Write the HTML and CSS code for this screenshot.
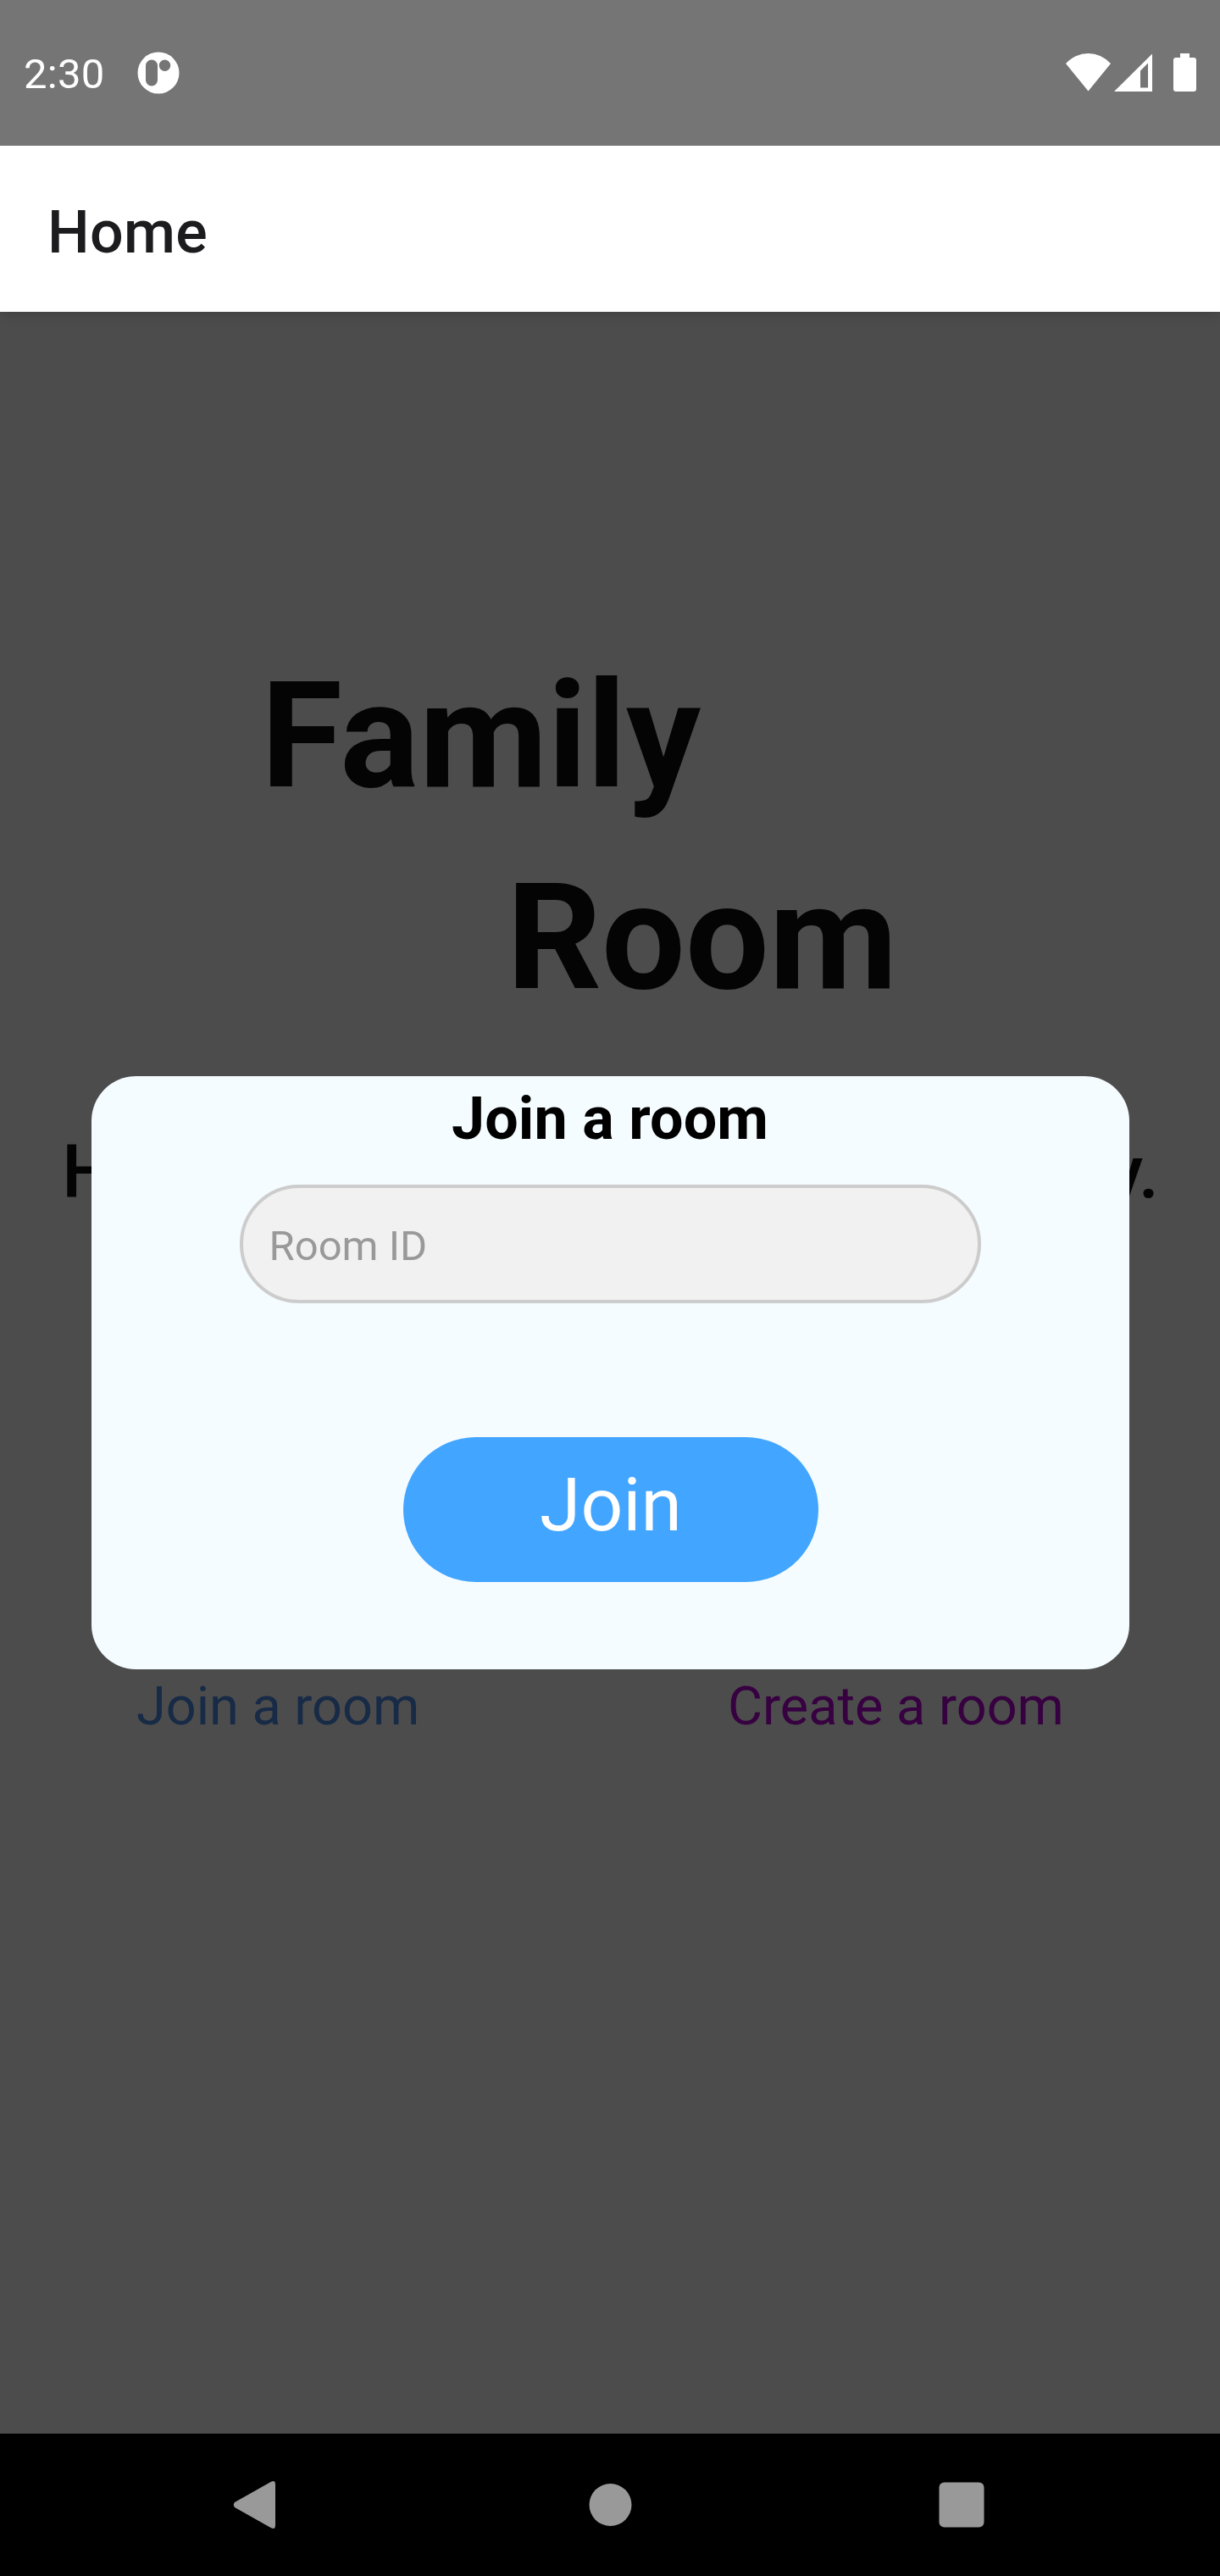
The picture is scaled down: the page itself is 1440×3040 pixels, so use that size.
FILE: index.html
```html
<!DOCTYPE html>
<html lang="en">
<head>
<meta charset="utf-8">
<title>Family Room</title>
<link rel="stylesheet" href="styles.css">
</head>
<body>
<div class="screen">
  <div class="status">
    <span class="clock">2:30</span>
    <svg class="app-icon" width="50" height="50" viewBox="0 0 50 50"><path fill="#fff" fill-rule="evenodd" d="M25 .5a24.5 24.5 0 1 1 0 49a24.5 24.5 0 1 1 0-49zM17 9.5a7 7 0 0 0-7 7v17a7 7 0 0 0 14 0v-17a7 7 0 0 0-7-7zM32.500 9.500a6.700 6.700 0 1 0 0 13.400a6.700 6.700 0 1 0 0-13.400z"/></svg>
    <svg class="system-icons" width="156" height="48" viewBox="0 0 156 48" fill="#fff">
      <path d="M0 14Q11.500 2 26.500 2T53 14L26.500 46.500z"/>
      <path fill-rule="evenodd" d="M57 47L102 2.500V47zM88 22.500V42.500H97V13.500z"/>
      <path d="M135 2h11v5h5q3 0 3 3v34q0 3-3 3h-21q-3 0-3-3V10q0-3 3-3h5z"/>
    </svg>
  </div>
  <header class="header"><span>Home</span></header>
  <main class="home">
    <h1 class="brand"><span class="brand-top">Family</span><span class="brand-bottom">Room</span></h1>
    <div class="tagline"><span>H</span><span>y.</span></div>
    <div class="links"><span class="join-link">Join a room</span><span class="create-link">Create a room</span></div>
    <section class="modal">
      <h2 class="modal-title">Join a room</h2>
      <input class="room-input" type="text" placeholder="Room ID">
      <button class="join-button">Join</button>
    </section>
  </main>
  <nav class="navbar">
    <svg width="60" height="60" viewBox="0 0 60 60" fill="#999"><path d="M7 27L50 2.800Q55 .5 55 6V54Q55 59.500 50 57.200L7 33Q4.500 30 7 27z"/></svg>
    <svg width="60" height="60" viewBox="0 0 60 60" fill="#999"><circle cx="32.500" cy="30" r="25"/></svg>
    <svg width="60" height="60" viewBox="0 0 60 60" fill="#999"><rect x="3.500" y="3.500" width="53" height="53" rx="6"/></svg>
  </nav>
</div>
</body>
</html>
```
FILE: styles.css
```css
* { box-sizing: border-box; }
body { margin: 0; font-family: Roboto, sans-serif; }
.screen { width: 1440px; height: 3040px; display: flex; flex-direction: column; background: #4c4c4c; overflow: hidden; }
.status { position: relative; z-index: 2; height: 172px; background: #757575; color: #fff; display: flex; align-items: flex-start; padding: 61px 26px 0 28px; }
.clock { font-size: 49px; line-height: 54px; width: 134px; letter-spacing: .3px; }
.system-icons { margin-left: auto; }
.header { height: 196px; background: #fff; display: flex; align-items: center; padding: 8px 56px 0; font-size: 70px; font-weight: 500; letter-spacing: .3px; color: #1c1c1e; box-shadow: 0 2px 14px rgba(0, 0, 0, .18); z-index: 1; }
.home { position: relative; flex: 1; padding-top: 382px; color: #040404; }
.brand { margin: 0; font-size: 175px; line-height: 238px; font-weight: 700; display: flex; flex-direction: column; }
.brand-top { padding-left: 308px; }
.brand-bottom { padding-left: 598px; }
.tagline { margin-top: 106px; padding: 0 72px 0 73px; display: flex; justify-content: space-between; font-size: 87.5px; line-height: 102px; font-weight: 500; }
.links { margin-top: 543px; padding-left: 161px; display: flex; font-size: 63px; line-height: 74px; }
.join-link { width: 698px; color: #172a46; }
.create-link { color: #370040; }
.modal { position: absolute; left: 107.5px; top: 902px; width: 1225px; height: 700px; padding-top: 9px; background: #f5fcff; border-radius: 52.5px; display: flex; flex-direction: column; align-items: center; color: #000; }
.modal-title { margin: 0; font-size: 70px; line-height: 82px; font-weight: 700; letter-spacing: .1px; }
.room-input { margin-top: 37px; width: 875px; height: 140px; padding: 5px 31px 0; border: 4px solid #ccc; border-radius: 70px; background: #f1f1f1; font: 49px Roboto, sans-serif; color: #000; }
.room-input::placeholder { color: #999; opacity: 1; }
.join-button { margin: 158px 0 0 2px; width: 490px; height: 171px; padding: 0 0 11px; border: 0; border-radius: 87.5px; background: #42a5ff; color: #fff; font: 87.5px Roboto, sans-serif; }
.navbar { height: 168px; background: #000; display: flex; align-items: center; justify-content: space-between; padding: 0 275px 0 270px; }
```
